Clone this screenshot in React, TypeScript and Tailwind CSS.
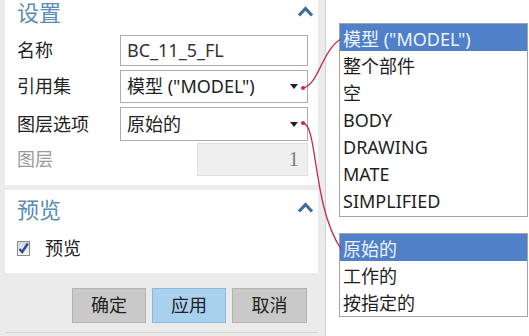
import React from "react"

// chevron used by collapsible section headers
const ChevronUp = () => (
  <svg width="17" height="11" viewBox="0 0 17 11" className="block">
    <path d="M2 9.5 L8.5 2.5 L15 9.5" fill="none" stroke="#3d6d98" strokeWidth="3.2" strokeLinejoin="miter" />
  </svg>
)

const Caret = () => (
  <svg width="8" height="5" viewBox="0 0 8 5" className="block">
    <path d="M0 0 H8 L4 5 Z" fill="#1f1f1f" />
  </svg>
)

const refSetItems = ['模型 ("MODEL")', "整个部件", "空", "BODY", "DRAWING", "MATE", "SIMPLIFIED"]
const layerItems = ["原始的", "工作的", "按指定的"]

const DropList = ({ items, className }: { items: string[]; className?: string }) => (
  <div className={"w-[189px] border border-[#a3a3a3] bg-white " + (className ?? "")}>
    {items.map((item, i) => (
      <div
        key={item}
        className={
          "h-[27px] pl-[3px] pt-[3px] flex items-center text-[18px] whitespace-nowrap " +
          (i === 0 ? "bg-[#4f80c8] text-[#eef3ff]" : "text-[#1e1e1e]")
        }
      >
        {item}
      </div>
    ))}
  </div>
)

export default function App() {
  return (
    <div className="relative w-[529px] h-[336px] overflow-hidden bg-white flex font-['Noto_Sans','Noto_Sans_CJK_SC',sans-serif]">
      {/* dialog panel */}
      <div className="w-[326px] h-full shrink-0 bg-[#ebebeb] border-r border-[#d2d2d2] pl-[5px] pr-[7px] flex flex-col">
        {/* 设置 */}
        <section className="h-[185px] bg-white pl-[12px] pr-[10px]">
          <div className="h-[24px] pt-[1px] flex items-center justify-between">
            <span className="text-[22px] leading-[23px] text-[#5b8cb6]">设置</span>
            <span className="mr-[-6px] mt-[-2px]">
              <ChevronUp />
            </span>
          </div>
          <div className="mt-[11px] h-[31px] flex items-center">
            <span className="w-[103px] text-[18px] text-[#222]">名称</span>
            <div className="w-[188px] h-full border border-[#adadad] pl-[6px] flex items-center text-[18px] text-[#333]">
              BC_11_5_FL
            </div>
          </div>
          <div className="mt-[4px] h-[33px] flex items-center">
            <span className="w-[103px] text-[18px] text-[#222]">引用集</span>
            <div className="w-[188px] h-full border border-[#adadad] pl-[6px] pr-[9px] flex items-center justify-between text-[18px] text-[#222]">
              <span>模型 ("MODEL")</span>
              <Caret />
            </div>
          </div>
          <div className="mt-[4px] h-[34px] flex items-center">
            <span className="w-[103px] text-[18px] text-[#222]">图层选项</span>
            <div className="w-[188px] h-full border border-[#adadad] pl-[6px] pr-[9px] flex items-center justify-between text-[18px] text-[#222]">
              <span>原始的</span>
              <Caret />
            </div>
          </div>
          <div className="mt-[2px] h-[33px] flex items-center">
            <span className="w-[103px] text-[18px] text-[#9a9a9a]">图层</span>
            <div className="ml-auto w-[111px] h-full bg-[#efefef] border border-[#e0e0e0] pr-[8px] flex items-center justify-end font-['Liberation_Serif',serif] text-[21px] text-[#808080]">
              1
            </div>
          </div>
        </section>

        {/* 预览 */}
        <section className="mt-[5px] h-[83px] bg-white pl-[12px] pr-[10px]">
          <div className="pt-[4px] h-[34px] flex items-center justify-between">
            <span className="text-[22px] leading-[24px] text-[#5b8cb6]">预览</span>
            <span className="mr-[-6px] mt-[-3px]">
              <ChevronUp />
            </span>
          </div>
          <div className="mt-[10px] h-[28px] flex items-center gap-[15px]">
            <div className="w-[13px] h-[15px] border border-[#8c8c8c] bg-gradient-to-b from-[#d8d8d8] to-[#f7f7f7] flex items-center justify-center">
              <svg width="11" height="12" viewBox="0 0 11 12" className="block">
                <path d="M1.5 7 L4.2 10 L9.8 1.5" fill="none" stroke="#2d4c9c" strokeWidth="2.4" />
              </svg>
            </div>
            <span className="text-[18px] text-[#222]">预览</span>
          </div>
        </section>

        {/* buttons */}
        <div className="mt-[15px] pl-[67px] flex gap-[6px]">
          <button className="w-[74px] h-[35px] bg-[#c9c9c9] border border-[#b3b3b3] text-[18px] text-[#222]">确定</button>
          <button className="w-[74px] h-[35px] bg-[#a9d1ee] border border-[#86bbe2] text-[18px] text-[#222]">应用</button>
          <button className="w-[75px] h-[35px] bg-[#c9c9c9] border border-[#b3b3b3] text-[18px] text-[#222]">取消</button>
        </div>
        <div className="mt-auto mb-[3px] h-px bg-[#d6d6d6]" />
      </div>

      {/* dropdown callouts */}
      <div className="flex-1 pl-[13px] pt-[23px]">
        <DropList items={refSetItems} className="pb-[3px]" />
        <DropList items={layerItems} className="mt-[16px] pb-[1px]" />
      </div>

      {/* leader lines */}
      <svg className="absolute inset-0 pointer-events-none" width="529" height="336" viewBox="0 0 529 336">
        <path d="M303 88 C318 86, 322 50, 341 39" fill="none" stroke="#c62a4c" strokeWidth="1.3" />
        <path d="M303 123 C318 125, 312 205, 341 249" fill="none" stroke="#c62a4c" strokeWidth="1.3" />
        <circle cx="303" cy="88" r="2" fill="#c62a4c" />
        <circle cx="303" cy="123" r="2" fill="#c62a4c" />
      </svg>
    </div>
  )
}
